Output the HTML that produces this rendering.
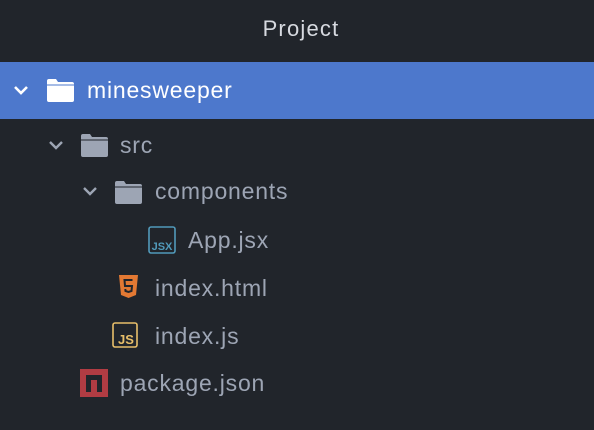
<!DOCTYPE html>
<html><head><style>
body{margin:0;width:594px;height:430px;background:#21252b;font-family:"Liberation Sans",sans-serif;overflow:hidden;position:relative}
.t{position:absolute;top:16px;left:0;width:602px;text-align:center;color:#d7dae0;font-size:22px;letter-spacing:1.2px}
.sel{position:absolute;top:62px;left:0;width:594px;height:57px;background:#4d78cc}
.r{position:absolute;font-size:23px;letter-spacing:0.8px;color:#9da5b4;line-height:28px}
.w{color:#fff}
svg{position:absolute}
</style></head><body>
<div class="t">Project</div>
<div class="sel"></div>
<svg style="left:12px;top:83px" width="18" height="14"><path d="M3 4l6 6 6-6" stroke="#fff" stroke-width="2.6" fill="none"/></svg>
<svg style="left:46px;top:78px" width="29" height="26"><path d="M1 3a2 2 0 0 1 2-2h7l2 3h14a2 2 0 0 1 2 2v16a2 2 0 0 1-2 2H3a2 2 0 0 1-2-2z" fill="#fff"/><path d="M1 7h27" stroke="#4d78cc" stroke-width="1"/></svg>
<div class="r w" style="left:87px;top:76px">minesweeper</div>

<svg style="left:47px;top:138px" width="18" height="14"><path d="M3 4l6 6 6-6" stroke="#9da5b4" stroke-width="2.4" fill="none"/></svg>
<svg style="left:80px;top:133px" width="29" height="26"><path d="M1 3a2 2 0 0 1 2-2h7l2 3h14a2 2 0 0 1 2 2v16a2 2 0 0 1-2 2H3a2 2 0 0 1-2-2z" fill="#9da5b4"/><path d="M1 7h27" stroke="#21252b" stroke-width="1"/></svg>
<div class="r" style="left:120px;top:131px">src</div>

<svg style="left:81px;top:184px" width="18" height="14"><path d="M3 4l6 6 6-6" stroke="#9da5b4" stroke-width="2.4" fill="none"/></svg>
<svg style="left:114px;top:180px" width="29" height="26"><path d="M1 3a2 2 0 0 1 2-2h7l2 3h14a2 2 0 0 1 2 2v16a2 2 0 0 1-2 2H3a2 2 0 0 1-2-2z" fill="#9da5b4"/><path d="M1 7h27" stroke="#21252b" stroke-width="1"/></svg>
<div class="r" style="left:155px;top:177px">components</div>

<svg style="left:148px;top:226px" width="29" height="29"><rect x="1" y="1" width="26" height="26" rx="2" fill="none" stroke="#519aba" stroke-width="1.6"/><text x="14" y="24" font-size="11" font-family="Liberation Sans" font-weight="bold" fill="#519aba" text-anchor="middle">JSX</text></svg>
<div class="r" style="left:188px;top:226px">App.jsx</div>

<svg style="left:118px;top:274px" width="21" height="26"><path d="M1 1h19l-2 20-7.5 3-7.5-3z" fill="#e37933"/><path d="M14.5 6H6.5l.5 6h7l-.5 5-3 1-3-1-.2-2" stroke="#21252b" stroke-width="2" fill="none"/></svg>
<div class="r" style="left:155px;top:274px">index.html</div>

<svg style="left:112px;top:322px" width="27" height="27"><rect x="1" y="1" width="24" height="24" rx="2" fill="none" stroke="#e8bf6a" stroke-width="1.6"/><text x="14" y="22" font-size="13" font-family="Liberation Sans" font-weight="bold" fill="#e8bf6a" text-anchor="middle">JS</text></svg>
<div class="r" style="left:155px;top:322px">index.js</div>

<svg style="left:80px;top:369px" width="29" height="29"><rect width="28" height="28" fill="#b13c43"/><path d="M6 23V6h16v17h-5V11h-6v12z" fill="#21252b"/></svg>
<div class="r" style="left:120px;top:369px">package.json</div>
</body></html>
